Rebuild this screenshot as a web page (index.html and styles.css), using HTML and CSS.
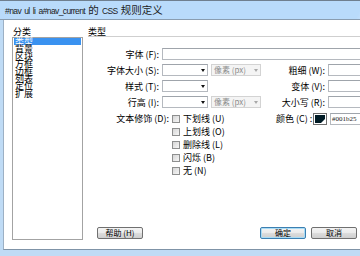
FILE: index.html
```html
<!DOCTYPE html>
<html lang="zh">
<head>
    <meta charset="UTF-8">
    <title>CSS 规则定义</title>
    <link rel="stylesheet" href="styles.css">
</head>
<body>

<div class="dialog">
    <div class="titlebar">#nav ul li a#nav_current <span class="zh">的</span> CSS <span class="zh">规则定义</span></div>

    <div class="frame">
        <div class="client">
            <div class="side">
                <div class="cap">分类</div>
                <ul class="cats">
                    <li class="sel">类型</li>
                    <li>背景</li>
                    <li>区块</li>
                    <li>方框</li>
                    <li>边框</li>
                    <li>列表</li>
                    <li>定位</li>
                    <li>扩展</li>
                </ul>
            </div>

            <div class="panel">
                <div class="cap head">类型</div>

                <div class="form">
                    <div class="row">
                        <span class="lbl">字体 (F):</span>
                        <span class="field grow"></span>
                    </div>

                    <div class="row">
                        <div class="left">
                            <span class="lbl">字体大小 (S):</span>
                            <span class="combo"></span>
                            <span class="combo unit off">像素 (px)</span>
                        </div>
                        <span class="rlbl">粗细 (W):</span>
                        <span class="field grow"></span>
                    </div>

                    <div class="row">
                        <div class="left">
                            <span class="lbl">样式 (T):</span>
                            <span class="combo"></span>
                        </div>
                        <span class="rlbl">变体 (V):</span>
                        <span class="field grow"></span>
                    </div>

                    <div class="row">
                        <div class="left">
                            <span class="lbl">行高 (I):</span>
                            <span class="combo"></span>
                            <span class="combo unit off">像素 (px)</span>
                        </div>
                        <span class="rlbl">大小写 (R):</span>
                        <span class="field grow"></span>
                    </div>

                    <div class="deco">
                        <div class="check-row">
                            <div class="left">
                                <span class="lbl wide">文本修饰 (D):</span>
                                <span class="check"></span>
                                <span>下划线 (U)</span>
                            </div>
                            <span class="clbl">颜色 (C) :</span>
                            <span class="swatch"><i></i></span>
                            <span class="field grow hex">#001b25</span>
                        </div>
                        <div class="check-row sub"><span class="check"></span><span>上划线 (O)</span></div>
                        <div class="check-row sub"><span class="check"></span><span>删除线 (L)</span></div>
                        <div class="check-row sub"><span class="check"></span><span>闪烁 (B)</span></div>
                        <div class="check-row sub"><span class="check"></span><span>无 (N)</span></div>
                    </div>
                </div>

                <div class="buttons">
                    <button class="btn help">帮助 (H)</button>
                    <span class="spacer"></span>
                    <button class="btn default">确定</button>
                    <button class="btn">取消</button>
                </div>
            </div>
        </div>
    </div>
</div>

</body>
</html>
```

FILE: styles.css
```css
* {
    box-sizing: border-box;
}

html, body {
    margin: 0;
    overflow: hidden;
}

body {
    font-family: "Noto Sans CJK SC", sans-serif;
    font-size: 9px;
    color: #000;
}

.dialog {
    width: 380px;
    height: 256px;
    display: flex;
    flex-direction: column;
    background: #bfdbf5;
}

.titlebar {
    height: 20px;
    padding-left: 5px;
    border-top: 1px solid #6f7f8f;
    border-bottom: 1px solid #8a9db0;
    background: linear-gradient(115deg, #b9dbfb 0, #b9dbfb 330px, #d3e9fd 342px, #c4e0fc 360px);
    font-family: "Liberation Sans", "Noto Sans CJK SC", sans-serif;
    font-size: 8.5px;
    letter-spacing: -0.6px;
    word-spacing: 1.4px;
    line-height: 18px;
    color: #1c1c1c;
    white-space: nowrap;
}

.titlebar .zh {
    font-family: "Noto Sans CJK SC", sans-serif;
    font-size: 10.5px;
    letter-spacing: 0;
}

.frame {
    flex: 1;
    display: flex;
    padding: 0 4px 6px 3px;
}

.client {
    flex: 1;
    display: flex;
    gap: 5px;
    padding: 7px 0 9px 8px;
    background: #fff;
    border-left: 1px solid #9cb0c4;
    border-bottom: 1px solid #7f93a7;
}

.cap {
    height: 10px;
    line-height: 10px;
    padding-left: 1px;
}

/* category list */
.side {
    width: 71px;
    display: flex;
    flex-direction: column;
}

.cats {
    flex: 1;
    margin: 0;
    padding: 0 1px;
    list-style: none;
    border: 1px solid #a3a3a3;
}

.cats li {
    height: 7.4px;
    line-height: 7.4px;
    padding-left: 1px;
    white-space: nowrap;
}

.cats li.sel {
    background: #3a92f0;
    color: #fff;
}

/* type panel */
.panel {
    flex: 1;
    display: flex;
    flex-direction: column;
}

.head {
    height: 10px;
    line-height: 9px;
    padding-left: 0;
    border-bottom: 1px solid #cfcfcf;
}

.form {
    margin-top: 11px;
}

.row {
    display: flex;
    align-items: center;
    height: 12px;
    margin-bottom: 4px;
}

.left {
    width: 188px;
    display: flex;
    align-items: center;
    flex-shrink: 0;
}

.lbl {
    width: 74px;
    flex-shrink: 0;
    padding-right: 3px;
    text-align: right;
    white-space: nowrap;
}

.lbl.wide {
    width: 84px;
}

.rlbl {
    width: 52px;
    padding-right: 3px;
    text-align: right;
    white-space: nowrap;
}

.field {
    height: 12px;
    border: 1px solid #b5b9bf;
    border-top-color: #9fa4ab;
    background: #fff;
}

.grow {
    flex: 1;
    margin-right: 10px;
}

.combo {
    position: relative;
    width: 46px;
    height: 12px;
    border: 1px solid #b5b9bf;
    border-top-color: #9fa4ab;
    background: #fff;
}

.combo::after {
    content: "";
    position: absolute;
    right: 2px;
    top: 4px;
    border-left: 2.5px solid transparent;
    border-right: 2.5px solid transparent;
    border-top: 3px solid #111;
}

.unit {
    width: 50px;
    margin-left: 3px;
    padding-left: 2px;
    font-size: 8px;
    line-height: 10px;
    white-space: nowrap;
}

.off {
    background: #f4f4f4;
    border-color: #d3d3d3;
    color: #8c8c8c;
}

.off::after {
    border-top-color: #a8a8a8;
}

/* text decoration */
.check-row {
    display: flex;
    align-items: center;
    height: 13px;
    white-space: nowrap;
}

.check-row.sub {
    padding-left: 84px;
}

.check {
    width: 8px;
    height: 8px;
    margin-right: 3px;
    flex-shrink: 0;
    border: 1px solid #8e8f8f;
    background: linear-gradient(135deg, #d6d6d6, #f6f6f6);
}

.clbl {
    width: 37px;
    padding-right: 3px;
    text-align: right;
}

.swatch {
    position: relative;
    width: 14px;
    height: 12px;
    padding: 1px;
    border: 1px solid #6d6d6d;
    background: #fff;
    margin-right: 3px;
}

.swatch i {
    display: block;
    width: 100%;
    height: 100%;
    background: #001b25;
}

.swatch::after {
    content: "";
    position: absolute;
    right: 1px;
    bottom: 1px;
    border-left: 4px solid transparent;
    border-bottom: 4px solid #fff;
}

.hex {
    font-family: "Liberation Serif", serif;
    font-size: 7px;
    line-height: 10px;
    padding-left: 1px;
    color: #222;
}

/* buttons */
.buttons {
    margin-top: auto;
    margin-bottom: 1px;
    margin-right: 19px;
    display: flex;
}

.spacer {
    flex: 1;
}

.btn {
    width: 46px;
    height: 12px;
    margin: 0 0 0 5px;
    padding: 0;
    border: 1px solid #707070;
    border-radius: 2px;
    background: linear-gradient(#f3f3f3, #ebebeb 50%, #dddddd 50%, #cfcfcf);
    font-family: "Noto Sans CJK SC", sans-serif;
    font-size: 8px;
    line-height: 10px;
    color: #000;
}

.btn.help {
    margin-left: 9px;
}

.btn.default {
    border-color: #3c7fb1;
    box-shadow: inset 0 0 0 1px #a9dcf6;
}
```
